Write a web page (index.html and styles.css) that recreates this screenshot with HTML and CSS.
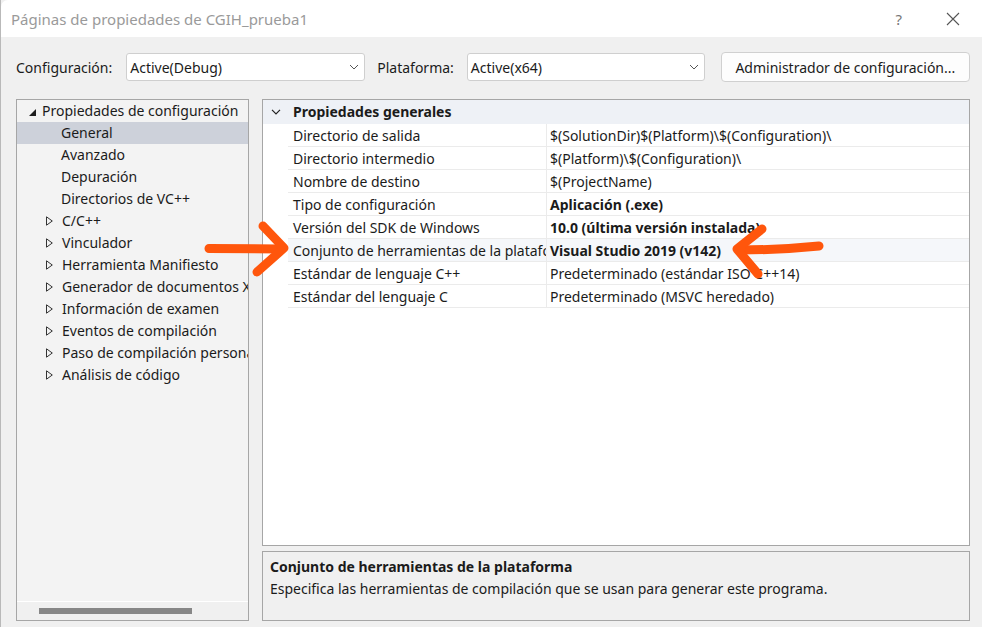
FILE: index.html
```html
<!DOCTYPE html>
<html lang="es">
<head>
<meta charset="utf-8">
<title>Páginas de propiedades de CGIH_prueba1</title>
<link rel="stylesheet" href="styles.css">
</head>
<body>
<div class="window">
  <header class="titlebar">
    <span class="title">Páginas de propiedades de CGIH_prueba1</span>
    <div class="title-buttons">
      <span class="help">?</span>
      <svg class="close" width="14" height="14" viewBox="0 0 14 14"><path d="M1 1L13 13M13 1L1 13" stroke="#555" stroke-width="1.1" fill="none"/></svg>
    </div>
  </header>

  <div class="toolbar">
    <label class="lbl">Configuración:</label>
    <div class="select sel-config"><span>Active(Debug)</span><svg width="10" height="6" viewBox="0 0 10 6"><path d="M1 1L5 5L9 1" stroke="#555" stroke-width="1" fill="none"/></svg></div>
    <label class="lbl lbl-plat">Plataforma:</label>
    <div class="select sel-plat"><span>Active(x64)</span><svg width="10" height="6" viewBox="0 0 10 6"><path d="M1 1L5 5L9 1" stroke="#555" stroke-width="1" fill="none"/></svg></div>
    <button class="btn">Administrador de configuración...</button>
  </div>

  <div class="main">
    <div class="tree">
      <div class="tree-items">
        <div class="node lvl0"><svg class="tri" width="7" height="7" viewBox="0 0 7 7"><path d="M7 0L7 7L0 7Z" fill="#1e1e1e"/></svg><span>Propiedades de configuración</span></div>
        <div class="node lvl1 selected"><span>General</span></div>
        <div class="node lvl1"><span>Avanzado</span></div>
        <div class="node lvl1"><span>Depuración</span></div>
        <div class="node lvl1"><span>Directorios de VC++</span></div>
        <div class="node lvl1 coll"><svg class="tri2" width="7" height="10" viewBox="0 0 7 10"><path d="M0.5 0.8L6.3 5L0.5 9.2Z" fill="none" stroke="#333" stroke-width="1"/></svg><span>C/C++</span></div>
        <div class="node lvl1 coll"><svg class="tri2" width="7" height="10" viewBox="0 0 7 10"><path d="M0.5 0.8L6.3 5L0.5 9.2Z" fill="none" stroke="#333" stroke-width="1"/></svg><span>Vinculador</span></div>
        <div class="node lvl1 coll"><svg class="tri2" width="7" height="10" viewBox="0 0 7 10"><path d="M0.5 0.8L6.3 5L0.5 9.2Z" fill="none" stroke="#333" stroke-width="1"/></svg><span>Herramienta Manifiesto</span></div>
        <div class="node lvl1 coll"><svg class="tri2" width="7" height="10" viewBox="0 0 7 10"><path d="M0.5 0.8L6.3 5L0.5 9.2Z" fill="none" stroke="#333" stroke-width="1"/></svg><span>Generador de documentos XML</span></div>
        <div class="node lvl1 coll"><svg class="tri2" width="7" height="10" viewBox="0 0 7 10"><path d="M0.5 0.8L6.3 5L0.5 9.2Z" fill="none" stroke="#333" stroke-width="1"/></svg><span>Información de examen</span></div>
        <div class="node lvl1 coll"><svg class="tri2" width="7" height="10" viewBox="0 0 7 10"><path d="M0.5 0.8L6.3 5L0.5 9.2Z" fill="none" stroke="#333" stroke-width="1"/></svg><span>Eventos de compilación</span></div>
        <div class="node lvl1 coll"><svg class="tri2" width="7" height="10" viewBox="0 0 7 10"><path d="M0.5 0.8L6.3 5L0.5 9.2Z" fill="none" stroke="#333" stroke-width="1"/></svg><span>Paso de compilación personalizada</span></div>
        <div class="node lvl1 coll"><svg class="tri2" width="7" height="10" viewBox="0 0 7 10"><path d="M0.5 0.8L6.3 5L0.5 9.2Z" fill="none" stroke="#333" stroke-width="1"/></svg><span>Análisis de código</span></div>
      </div>
      <div class="hscroll"><div class="thumb"></div></div>
    </div>

    <div class="right">
      <div class="grid">
        <div class="grow header">
          <div class="gutter"><svg width="10" height="6" viewBox="0 0 10 6"><path d="M1 0.8L5 4.8L9 0.8" stroke="#222" stroke-width="1.2" fill="none"/></svg></div>
          <div class="hcell">Propiedades generales</div>
        </div>
        <div class="grow"><div class="gutter"></div><div class="name">Directorio de salida</div><div class="val">$(SolutionDir)$(Platform)\$(Configuration)\</div></div>
        <div class="grow"><div class="gutter"></div><div class="name">Directorio intermedio</div><div class="val">$(Platform)\$(Configuration)\</div></div>
        <div class="grow"><div class="gutter"></div><div class="name">Nombre de destino</div><div class="val">$(ProjectName)</div></div>
        <div class="grow"><div class="gutter"></div><div class="name">Tipo de configuración</div><div class="val bold">Aplicación (.exe)</div></div>
        <div class="grow"><div class="gutter"></div><div class="name">Versión del SDK de Windows</div><div class="val bold">10.0 (última versión instalada)</div></div>
        <div class="grow sel"><div class="gutter"></div><div class="name">Conjunto de herramientas de la plataforma</div><div class="val bold">Visual Studio 2019 (v142)</div></div>
        <div class="grow"><div class="gutter"></div><div class="name">Estándar de lenguaje C++</div><div class="val">Predeterminado (estándar ISO C++14)</div></div>
        <div class="grow"><div class="gutter"></div><div class="name">Estándar del lenguaje C</div><div class="val">Predeterminado (MSVC heredado)</div></div>
      </div>
      <div class="desc">
        <div class="desc-title">Conjunto de herramientas de la plataforma</div>
        <div class="desc-text">Especifica las herramientas de compilación que se usan para generar este programa.</div>
      </div>
    </div>
  </div>

  <svg class="arrows" width="982" height="627" viewBox="0 0 982 627">
    <g stroke="#ff560c" stroke-width="9" stroke-linecap="round" stroke-linejoin="round" fill="none">
      <path d="M209 248.5L281 249"/>
      <path d="M263 226L284 248L257 272"/>
      <path d="M739 250Q780 250 819 246"/>
      <path d="M762 229L737 249L758 274"/>
    </g>
  </svg>
</div>
</body>
</html>
```

FILE: styles.css
```css
* { box-sizing: border-box; }
html, body { margin: 0; padding: 0; }
body {
  width: 982px;
  height: 627px;
  overflow: hidden;
  background: #f0f0f0;
  font-family: "Noto Sans", "Open Sans", sans-serif;
  font-size: 14px;
  color: #1b1b1b;
}
.window {
  position: relative;
  width: 982px;
  height: 627px;
  border-left: 1px solid #b9b9b9;
}
.titlebar {
  height: 37px;
  background: #ffffff;
  display: flex;
  align-items: center;
  justify-content: space-between;
  padding-left: 10px;
  border-top-left-radius: 7px;
}
.title {
  color: #9a9a9a;
  font-size: 15px;
}
.title-buttons {
  display: flex;
  align-items: center;
  gap: 44px;
  padding-right: 22px;
}
.help {
  color: #777;
  font-size: 15px;
}
.close { display: block; }

.toolbar {
  display: flex;
  align-items: center;
  height: 30px;
  margin-top: 15px;
  padding-left: 15px;
}
.lbl { margin-right: 14px; }
.lbl-plat { margin-left: 12px; margin-right: 13px; }
.select {
  height: 28px;
  background: #fff;
  border: 1px solid #cfcfcf;
  border-radius: 3px;
  display: flex;
  align-items: center;
  justify-content: space-between;
  padding: 0 5px 0 3px;
}
.sel-config { width: 239px; }
.sel-plat { width: 238px; }
.btn {
  margin-left: 16px;
  width: 249px;
  height: 30px;
  background: #fdfdfd;
  border: 1px solid #d0d0d0;
  border-radius: 4px;
  font-family: inherit;
  font-size: 14px;
  color: #1b1b1b;
  padding: 0;
}

.main {
  display: flex;
  gap: 13px;
  margin-top: 17px;
  padding-left: 15px;
  height: 522px;
}
.tree {
  width: 233px;
  height: 522px;
  border: 1px solid #a6a6a6;
  background: #f3f3f3;
  display: flex;
  flex-direction: column;
}
.tree-items { flex: 1; overflow: hidden; }
.node {
  height: 22px;
  display: flex;
  align-items: center;
  white-space: nowrap;
  overflow: hidden;
}
.node span { line-height: 22px; }
.lvl0 { padding-left: 12px; }
.lvl0 .tri { margin-right: 6px; margin-top: 2px; flex: none; }
.lvl1 { padding-left: 44px; }
.lvl1.coll { padding-left: 29px; }
.tri2 { margin-right: 9px; flex: none; }
.selected { background: #cdd1da; }
.hscroll {
  height: 19px;
  border-top: 1px solid #ffffff;
  background: #f0f0f0;
  display: flex;
  align-items: center;
  padding-left: 22px;
}
.thumb {
  width: 153px;
  height: 6px;
  background: #878787;
}

.right {
  width: 708px;
  display: flex;
  flex-direction: column;
  gap: 5px;
}
.grid {
  height: 447px;
  border: 1px solid #a6a6a6;
  background: #ffffff;
}
.grow {
  display: flex;
  height: 23px;
}
.grow.header { height: 24px; }
.gutter {
  width: 25px;
  flex: none;
  display: flex;
  align-items: center;
  justify-content: center;
}
.header { background: #eef1f6; }
.hcell {
  font-weight: bold;
  padding-left: 5px;
  line-height: 24px;
}
.name {
  width: 258px;
  flex: none;
  padding-left: 5px;
  padding-top: 1px;
  line-height: 21px;
  border-bottom: 1px solid #ebebeb;
  white-space: nowrap;
  overflow: hidden;
}
.val {
  flex: 1;
  padding-left: 3px;
  padding-top: 1px;
  line-height: 21px;
  border-bottom: 1px solid #ebebeb;
  border-left: 1px solid #ebebeb;
  white-space: nowrap;
  overflow: hidden;
}
.bold { font-weight: bold; }
.sel .name, .sel .val { background: #f5f7fa; }

.desc {
  height: 70px;
  border: 1px solid #a6a6a6;
  background: #f0f0f0;
  padding: 4px 7px;
}
.desc-title { font-weight: bold; line-height: 22px; }
.desc-text { line-height: 22px; }

.arrows {
  position: absolute;
  left: -1px;
  top: 0;
  pointer-events: none;
}
```
